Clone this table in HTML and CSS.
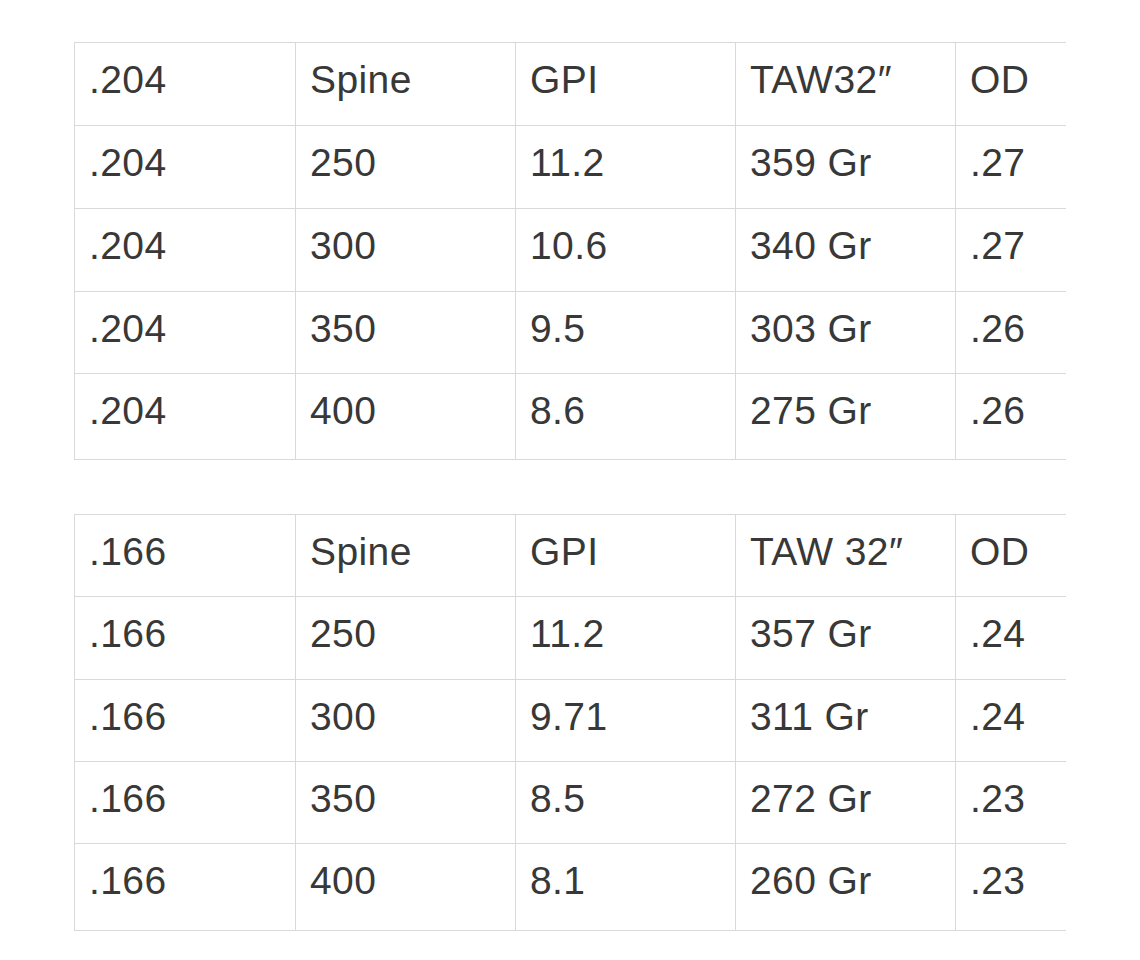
FILE: index.html
```html
<!DOCTYPE html>
<html>
<head>
<meta charset="utf-8">
<link rel="stylesheet" href="styles.css">
</head>
<body>
<div class="page">
  <div class="grid t1">
    <div class="c">.204</div><div class="c">Spine</div><div class="c">GPI</div><div class="c">TAW32″</div><div class="c last">OD</div>
    <div class="c">.204</div><div class="c">250</div><div class="c">11.2</div><div class="c">359 Gr</div><div class="c last">.27</div>
    <div class="c">.204</div><div class="c">300</div><div class="c">10.6</div><div class="c">340 Gr</div><div class="c last">.27</div>
    <div class="c">.204</div><div class="c">350</div><div class="c">9.5</div><div class="c">303 Gr</div><div class="c last">.26</div>
    <div class="c">.204</div><div class="c">400</div><div class="c">8.6</div><div class="c">275 Gr</div><div class="c last">.26</div>
  </div>
  <div class="grid t2">
    <div class="c">.166</div><div class="c">Spine</div><div class="c">GPI</div><div class="c">TAW 32″</div><div class="c last">OD</div>
    <div class="c">.166</div><div class="c">250</div><div class="c">11.2</div><div class="c">357 Gr</div><div class="c last">.24</div>
    <div class="c">.166</div><div class="c">300</div><div class="c">9.71</div><div class="c">311 Gr</div><div class="c last">.24</div>
    <div class="c">.166</div><div class="c">350</div><div class="c">8.5</div><div class="c">272 Gr</div><div class="c last">.23</div>
    <div class="c">.166</div><div class="c">400</div><div class="c">8.1</div><div class="c">260 Gr</div><div class="c last">.23</div>
  </div>
</div>
</body>
</html>
```

FILE: styles.css
```css
html, body {
  margin: 0;
  padding: 0;
  background: #ffffff;
}

.page {
  padding: 42px 0 0 74px;
  display: flex;
  flex-direction: column;
  gap: 54px;
}

.grid {
  display: grid;
  grid-template-columns: 221px 220px 220px 220px 110px;
  width: 991px;
  border-top: 1px solid #d9d9d9;
  border-left: 1px solid #d9d9d9;
}

.t1 {
  grid-template-rows: 83px 83px 83px 82px 86px;
}

.t2 {
  grid-template-rows: 82px 83px 82px 82px 87px;
}

.c {
  box-sizing: border-box;
  border-right: 1px solid #d9d9d9;
  border-bottom: 1px solid #d9d9d9;
  padding: 17px 0 0 14px;
  font-family: "Liberation Sans", Arial, sans-serif;
  font-size: 39px;
  line-height: 39px;
  letter-spacing: 0.4px;
  color: #383838;
  white-space: nowrap;
}

.c.last {
  border-right: none;
}
```
